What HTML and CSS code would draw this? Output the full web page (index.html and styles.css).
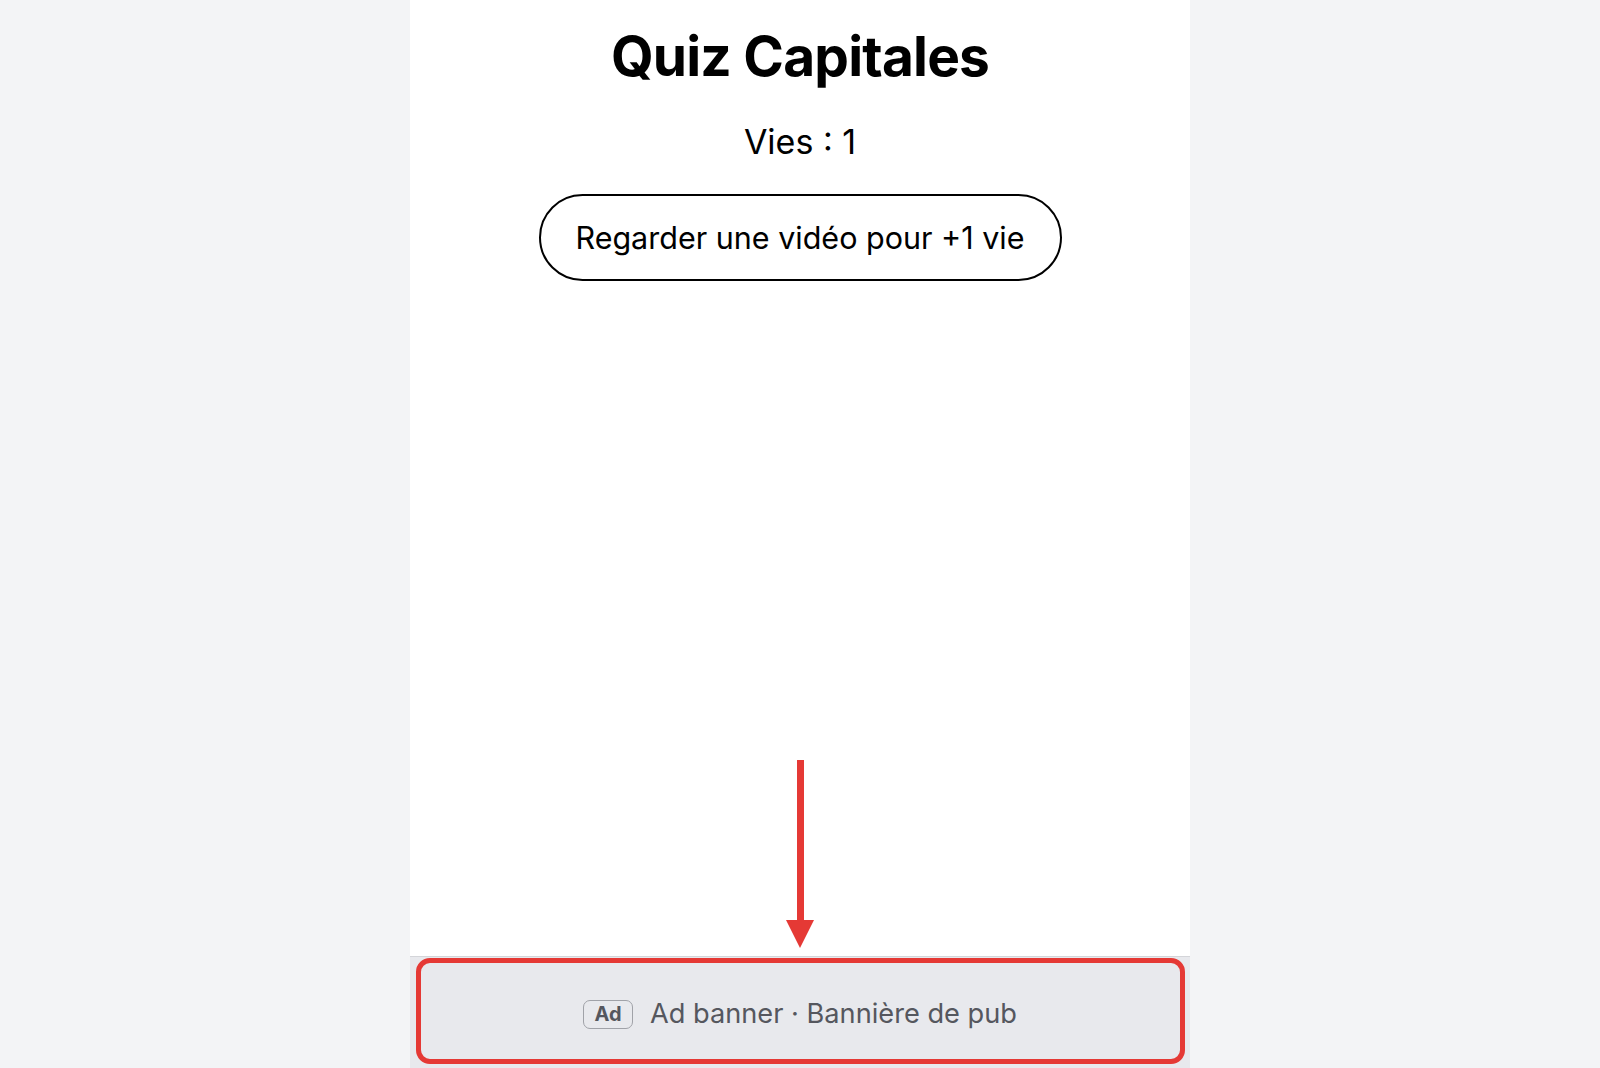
FILE: index.html
```html
<!DOCTYPE html>
<html lang="fr">

<head>
    <meta charset="UTF-8">
    <title>Quiz Capitales</title>
    <meta name="viewport" content="width=device-width, initial-scale=1.0">
    <link rel="stylesheet" href="styles.css">
</head>

<body>
    <div class="app">
        <main class="game">
            <h1>Quiz Capitales</h1>
            <p class="lives">Vies : 1</p>
            <button type="button" class="reward">Regarder une vidéo pour +1 vie</button>
        </main>

        <div class="arrow" aria-hidden="true">
            <span class="arrow-stem"></span>
            <span class="arrow-head"></span>
        </div>

        <footer class="ad-banner">
            <span class="ad-badge">Ad</span>
            <span class="ad-text">Ad banner · Bannière de pub</span>
            <span class="highlight" aria-hidden="true"></span>
        </footer>
    </div>
</body>

</html>
```

FILE: styles.css
```css
body {
    margin: 0;
    padding: 0;
    font-family: Inter, 'Noto Sans', sans-serif;
    background: #f3f4f6;
    color: #000000;
}

.app {
    position: relative;
    width: 780px;
    margin: 0 auto;
    min-height: 100vh;
    background: #ffffff;
    display: flex;
    flex-direction: column;
}

.game {
    flex: 1;
    display: flex;
    flex-direction: column;
    align-items: center;
    padding-top: 22px;
}

.game h1 {
    margin: 0;
    font-size: 55px;
    font-weight: 700;
    line-height: 68px;
    letter-spacing: -0.8px;
}

.lives {
    margin: 30px 0 0;
    font-size: 34px;
    line-height: 44px;
}

.reward {
    margin-top: 30px;
    padding: 0;
    height: 87px;
    width: 523px;
    font-family: inherit;
    font-size: 30.5px;
    white-space: nowrap;
    color: #000000;
    background: #ffffff;
    border: 2px solid #000000;
    border-radius: 44px;
    cursor: pointer;
}

/* annotation: red arrow pointing at the banner */
.arrow {
    position: absolute;
    left: 376px;
    top: 760px;
    width: 28px;
    height: 188px;
    display: flex;
    flex-direction: column;
    align-items: center;
}

.arrow-stem {
    width: 7px;
    flex: 1;
    background: #e53935;
}

.arrow-head {
    width: 0;
    height: 0;
    border-left: 14px solid transparent;
    border-right: 14px solid transparent;
    border-top: 28px solid #e53935;
    margin-top: -2px;
}

.ad-banner {
    position: relative;
    height: 111px;
    background: #e8e9ed;
    border-top: 1px solid #d4d5d9;
    display: flex;
    align-items: center;
    justify-content: center;
    gap: 17px;
    color: #55575e;
}

.ad-badge {
    box-sizing: border-box;
    width: 50px;
    height: 29px;
    display: flex;
    align-items: center;
    justify-content: center;
    border: 1.5px solid #a0a2a8;
    border-radius: 7px;
    font-size: 20px;
    font-weight: 700;
    margin-top: 3px;
}

.ad-text {
    font-size: 27.2px;
    margin-top: 2px;
}

.highlight {
    position: absolute;
    top: 1px;
    left: 6px;
    right: 5px;
    bottom: 4px;
    border: 5px solid #e53935;
    border-radius: 14px;
}
```
